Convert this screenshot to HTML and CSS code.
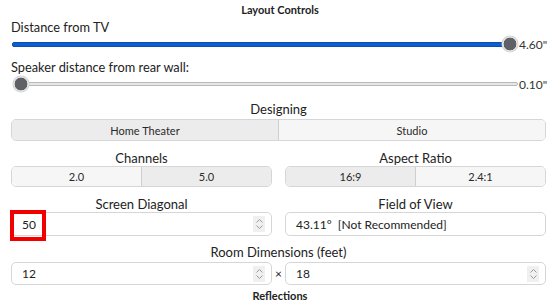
FILE: index.html
```html
<!DOCTYPE html>
<html lang="en">
<head>
    <meta charset="UTF-8">
    <title>Layout Controls</title>
    <link rel="stylesheet" href="styles.css">
</head>
<body>
    <div class="panel">
        <div class="section-title">Layout Controls</div>

        <div class="field-label">Distance from TV</div>
        <div class="slider-row">
            <div class="track filled">
                <div class="knob" style="left: 100%"></div>
            </div>
            <span class="slider-value">4.60"</span>
        </div>

        <div class="field-label second">Speaker distance from rear wall:</div>
        <div class="slider-row short">
            <div class="track empty">
                <div class="knob" style="left: 0%"></div>
            </div>
            <span class="slider-value">0.10"</span>
        </div>

        <div class="group-label">Designing</div>
        <div class="segmented tall">
            <div class="seg active">Home Theater</div>
            <div class="seg">Studio</div>
        </div>

        <div class="two-col">
            <div class="col">
                <div class="group-label">Channels</div>
                <div class="segmented">
                    <div class="seg">2.0</div>
                    <div class="seg active">5.0</div>
                </div>
            </div>
            <div class="col">
                <div class="group-label">Aspect Ratio</div>
                <div class="segmented">
                    <div class="seg active">16:9</div>
                    <div class="seg">2.4:1</div>
                </div>
            </div>
        </div>

        <div class="two-col">
            <div class="col">
                <div class="group-label">Screen Diagonal</div>
                <div class="spinbox">
                    <span class="spin-text">50</span>
                    <span class="highlight"></span>
                    <span class="spin-arrows">
                        <svg width="9" height="12" viewBox="0 0 9 12"><path d="M1.5 4.5 L4.5 1.5 L7.5 4.5 M1.5 7.5 L4.5 10.5 L7.5 7.5" fill="none" stroke="#9a9a9a" stroke-width="1"/></svg>
                    </span>
                </div>
            </div>
            <div class="col">
                <div class="group-label">Field of View</div>
                <div class="spinbox readonly">
                    <span class="spin-text">43.11°&nbsp; [Not Recommended]</span>
                </div>
            </div>
        </div>

        <div class="group-label">Room Dimensions (feet)</div>
        <div class="dims-row">
            <div class="spinbox">
                <span class="spin-text">12</span>
                <span class="spin-arrows">
                    <svg width="9" height="12" viewBox="0 0 9 12"><path d="M1.5 4.5 L4.5 1.5 L7.5 4.5 M1.5 7.5 L4.5 10.5 L7.5 7.5" fill="none" stroke="#9a9a9a" stroke-width="1"/></svg>
                </span>
            </div>
            <span class="times">×</span>
            <div class="spinbox">
                <span class="spin-text">18</span>
                <span class="spin-arrows">
                    <svg width="9" height="12" viewBox="0 0 9 12"><path d="M1.5 4.5 L4.5 1.5 L7.5 4.5 M1.5 7.5 L4.5 10.5 L7.5 7.5" fill="none" stroke="#9a9a9a" stroke-width="1"/></svg>
                </span>
            </div>
        </div>

        <div class="section-title bottom">Reflections</div>
    </div>
</body>
</html>
```

FILE: styles.css
```css
html, body {
    margin: 0;
    padding: 0;
    background: #ffffff;
    font-family: 'Lato', 'Noto Sans', sans-serif;
    color: #222;
}
.panel {
    width: 560px;
    height: 308px;
    padding: 2px 14px 0 11px;
    box-sizing: border-box;
    overflow: hidden;
}
.section-title {
    text-align: center;
    font-size: 11px;
    font-weight: 700;
    line-height: 16px;
    padding-left: 3px;
}
.section-title.bottom {
    margin-top: 2px;
    padding-top: 1px;
    line-height: 15px;
}
.field-label {
    font-size: 12.8px;
    line-height: 15px;
    padding-top: 2px;
}
.field-label.second {
    margin-top: 5px;
}
.slider-row {
    display: flex;
    align-items: center;
    height: 18px;
}
.track {
    position: relative;
    flex: 1;
    margin: 0 8px 0 1px;
    border-radius: 2px;
}
.track.filled {
    height: 3px;
    background: #0d5fd0;
    border: 1px solid #0a4fb0;
    margin-left: 1px;
}
.track.empty {
    height: 2px;
    background: #e6e6e6;
    border: 1px solid #b9b9b9;
    margin-left: 9px;
    margin-right: 1px;
}
.knob {
    position: absolute;
    top: 50%;
    width: 13px;
    height: 13px;
    border-radius: 50%;
    background: #5f6166;
    border: 1.5px solid #ffffff;
    box-shadow: 0 0 0 1px #d0d0d0;
    transform: translate(-50%, -50%);
}
.slider-value {
    font-size: 12px;
    width: 27px;
    color: #333;
}
.group-label {
    text-align: center;
    font-size: 13px;
    line-height: 15px;
    padding-top: 2px;
    margin-top: 7px;
}
.segmented {
    display: flex;
    height: 21px;
    box-sizing: border-box;
    border: 1px solid #d6d6d6;
    border-radius: 5px;
    overflow: hidden;
}
.segmented.tall {
    height: 22px;
    margin-top: 2px;
}
.seg {
    flex: 1;
    display: flex;
    align-items: center;
    justify-content: center;
    font-size: 11px;
    background: #f6f6f6;
    color: #2a2a2a;
}
.seg + .seg {
    border-left: 1px solid #cfcfcf;
}
.seg.active {
    background: #ececec;
}
.two-col {
    display: flex;
    gap: 13px;
}
.two-col .group-label {
    margin-top: 8px;
}
.col {
    flex: 1;
}
.spinbox {
    position: relative;
    display: flex;
    align-items: center;
    height: 24px;
    box-sizing: border-box;
    border: 1px solid #d6d6d6;
    border-radius: 5px;
    padding: 0 6px 0 10px;
    font-size: 12px;
    color: #222;
    flex: 1;
}
.spin-text {
    flex: 1;
}
.spin-arrows {
    display: flex;
    align-items: center;
    justify-content: center;
    width: 12px;
    height: 16px;
    background: #f0f0f0;
}
.highlight {
    position: absolute;
    left: -2px;
    top: -3px;
    width: 28px;
    height: 23px;
    border: 4px solid #f20000;
}
.dims-row {
    display: flex;
    align-items: center;
    margin-top: 2px;
}
.dims-row .spinbox {
    height: 23px;
}
.dims-row .times {
    width: 13px;
    text-align: center;
    font-size: 12px;
}
```
